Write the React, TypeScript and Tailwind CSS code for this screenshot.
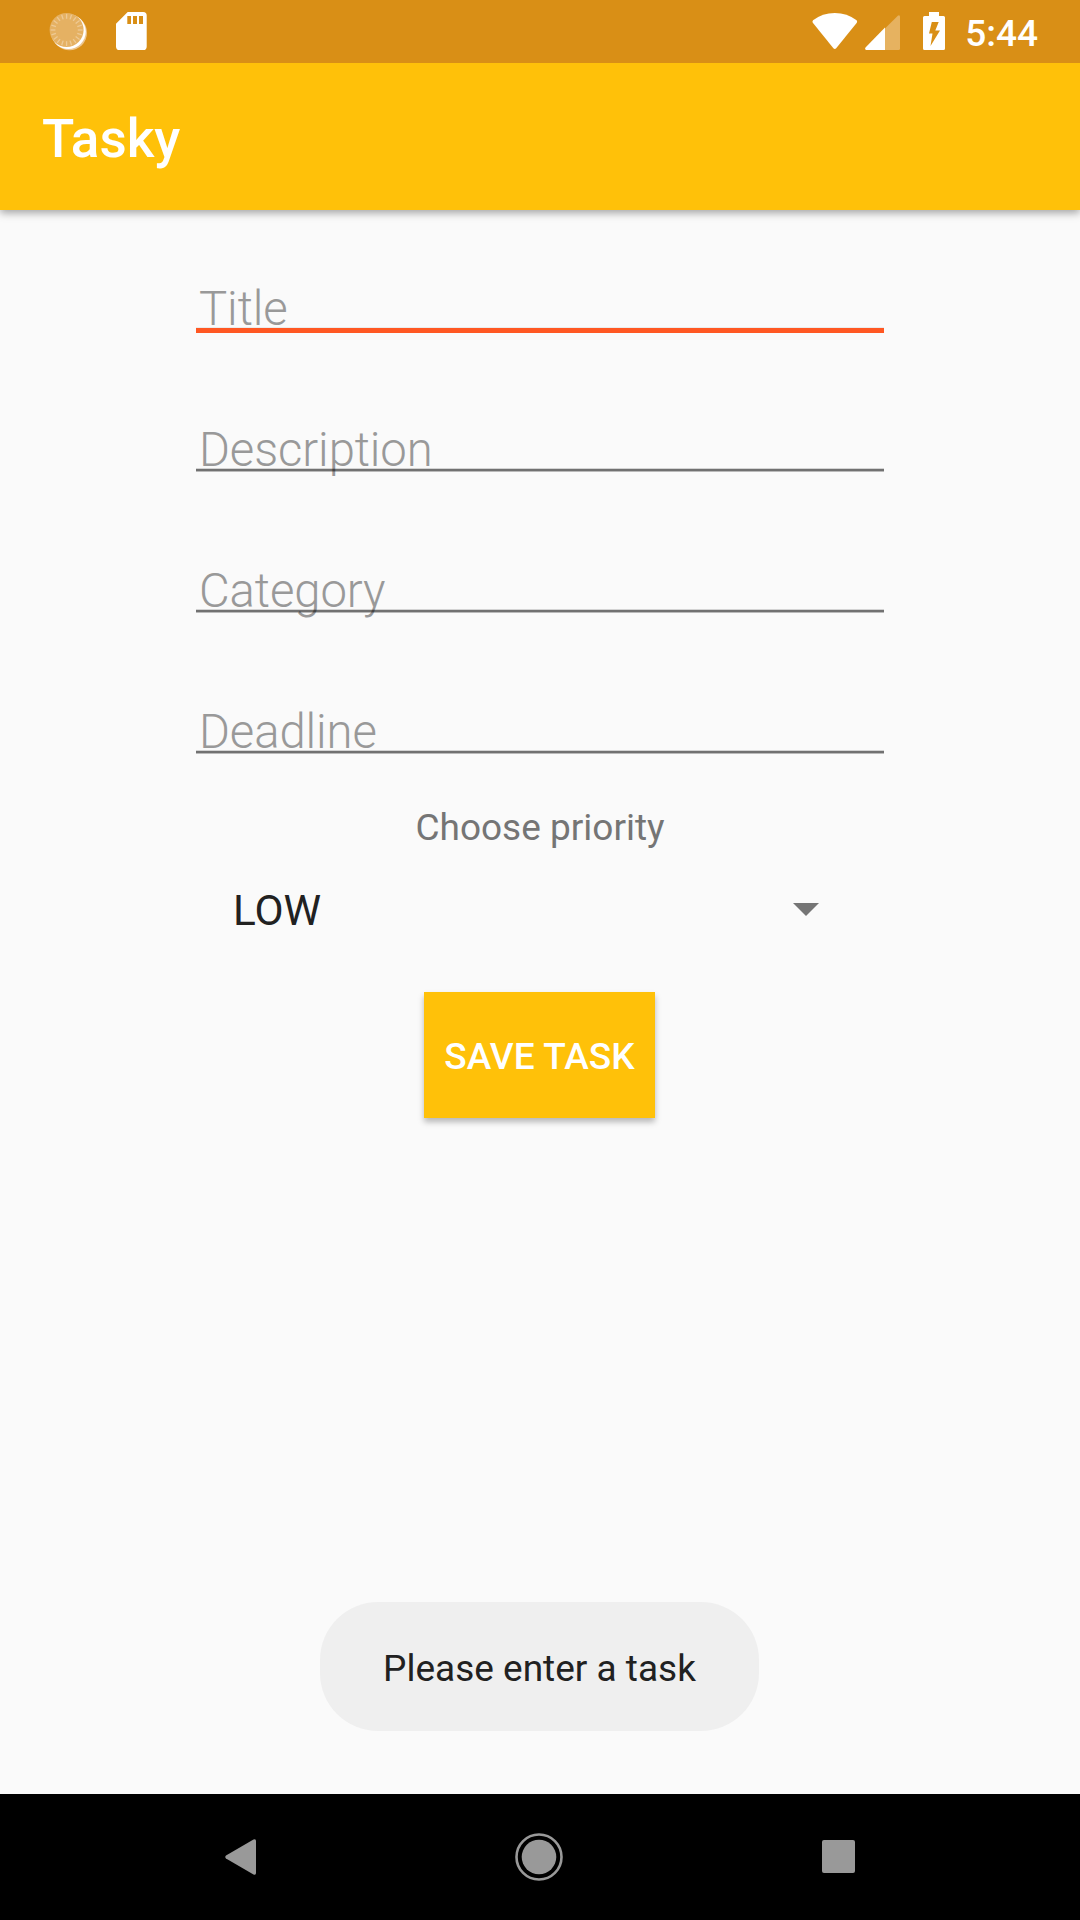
import React from "react";

const RAYS = Array.from({ length: 20 }, (_, i) => i * 18);

function SpinnerIcon() {
  return (
    <svg className="h-[40px] w-[40px]" viewBox="48 11 40 40">
      <circle cx="69.5" cy="32.8" r="17.5" fill="#ecc58e" />
      <circle cx="68.3" cy="31.6" r="17.5" fill="#fff" />
      <circle cx="66.6" cy="30" r="17" fill="#e5b163" />
      {RAYS.map((a) => (
        <line key={a} x1="66.6" y1="14" x2="66.6" y2="18.8" stroke="#eeca95" strokeWidth="1.3" transform={`rotate(${a} 66.6 30)`} />
      ))}
    </svg>
  );
}

function SdCardIcon() {
  return (
    <svg className="h-[38px] w-[31px]" viewBox="0 0 31 38">
      <path fill="#fff" fillRule="evenodd" d="M11.7 0H27.2Q30.7 0 30.7 3.6V34.4Q30.7 38 27.2 38H3.5Q0 38 0 34.4V11.7ZM11.3 4V12H15V4ZM17 4V12H21V4ZM23 4V12H27V4Z" />
    </svg>
  );
}

function WifiIcon() {
  return (
    <svg className="h-[37px] w-[46px]" viewBox="0 0 46 37">
      <path fill="#fff" d="M1 7.3Q10.500 0 22.800 0T44.600 7.300Q45.600 8.500 44.800 9.700L24.200 35.300Q22.800 36.800 21.400 35.300L.8 9.700Q0 8.500 1 7.300Z" />
    </svg>
  );
}

function SignalIcon() {
  return (
    <svg className="h-[36px] w-[36px]" viewBox="0 0 36 36">
      <path fill="#e6b260" d="M20 13.500L32.800 .7Q35 -.5 35 2V33.500Q35 35 33.600 35H20Z" />
      <path fill="#fff" d="M20 12.500V35H1.200Q-.6 34.500 .5 32.500Z" />
    </svg>
  );
}

function BatteryIcon() {
  return (
    <svg className="h-[38px] w-[22px]" viewBox="0 0 22 38">
      <path fill="#fff" fillRule="evenodd" d="M6 0H16V4H20.500Q22 4 22 5.500V36.500Q22 38 20.500 38H1.500Q0 38 0 36.500V5.500Q0 4 1.500 4H6ZM8.800 10L6 21.500H9.500L7.500 34L17 18.500H12.300L15.700 10Z" />
    </svg>
  );
}

function Field({ label, focused = false }: { label: string; focused?: boolean }) {
  return (
    <div className="relative h-[141px] w-[688px] pl-[3px]">
      <div className="pt-[30px] text-[47.25px] leading-[56px] font-[330] tracking-[-0.1px] text-[#999]">{label}</div>
      {focused ? (
        <div className="absolute top-[76px] left-0 h-[6px] w-full border-t border-[#ebebeb] bg-[#ff5722]" />
      ) : (
        <div className="absolute top-[76px] left-0 h-[4px] w-full border-y border-t-black/15 border-b-black/25 bg-black/55 bg-clip-padding" />
      )}
    </div>
  );
}

export default function App() {
  return (
    <div className="flex h-[1920px] w-[1080px] flex-col overflow-hidden bg-[#fafafa] font-['Roboto',sans-serif]">
      <div className="relative z-20 flex h-[63px] shrink-0 items-start bg-[#d98f16]">
        <div className="flex pt-[11px] pl-12"><SpinnerIcon /></div>
        <div className="pt-[12px] pl-7"><SdCardIcon /></div>
        <div className="ml-auto flex items-start pr-[42px]">
          <div className="pt-[13px]"><WifiIcon /></div>
          <div className="ml-[7px] pt-[15px]"><SignalIcon /></div>
          <div className="ml-[22px] pt-[12px]"><BatteryIcon /></div>
          <div className="ml-[20px] pt-[12px] text-[37px] leading-[44px] font-medium text-white">5:44</div>
        </div>
      </div>
      <header className="z-10 flex h-[147px] shrink-0 items-center bg-[#ffc109] pt-[7px] pl-[42px] text-[53px] font-medium text-white shadow-[0_3px_8px_rgba(0,0,0,0.35)]">
        Tasky
      </header>
      <main className="flex flex-1 flex-col items-center pt-[41px]">
        <Field label="Title" focused />
        <Field label="Description" />
        <Field label="Category" />
        <Field label="Deadline" />
        <div className="-mt-[12px] text-[37px] leading-[50px] text-[#757575]">Choose priority</div>
        <div className="mt-[7px] flex h-[100px] w-[688px] items-center justify-between pr-[65px] pl-[37px] text-[42.3px] text-[#212121]">
          <span className="pt-[2px]">LOW</span>
          <svg className="mb-px h-[13px] w-[26px]" viewBox="0 0 26 13"><path fill="#757575" d="M0 0H26L13 13Z" /></svg>
        </div>
        <button className="mt-[32px] mr-px h-[126px] w-[231px] bg-[#ffc109] pt-[3px] text-[37px] font-medium tracking-[0.1px] whitespace-nowrap text-white shadow-[0_4px_6px_rgba(0,0,0,0.27)]">
          SAVE TASK
        </button>
        <div className="mt-auto mr-px mb-[63px] flex h-[129px] w-[439px] items-center justify-center rounded-[58px] bg-[#efefef] pt-[5px] text-[37px] text-[#212121]">
          Please enter a task
        </div>
      </main>
      <nav className="flex h-[126px] shrink-0 items-center justify-between bg-black pr-[225px] pl-[225px]">
        <svg className="h-[36px] w-[32px]" viewBox="0 0 32 36"><path fill="#999" d="M1 16.500L28.500 .5Q31 -.5 31 2V34Q31 36.500 28.500 35.500L1 19.500Q-.5 18 1 16.500Z" /></svg>
        <svg className="mr-px mb-px h-[48px] w-[48px]" viewBox="0 0 48 48"><circle cx="24" cy="24" r="22.500" fill="none" stroke="#999" strokeWidth="2.600" /><circle cx="24" cy="24" r="17.300" fill="#999" /></svg>
        <div className="mb-px h-[33px] w-[33px] rounded-[2px] bg-[#999]" />
      </nav>
    </div>
  );
}
